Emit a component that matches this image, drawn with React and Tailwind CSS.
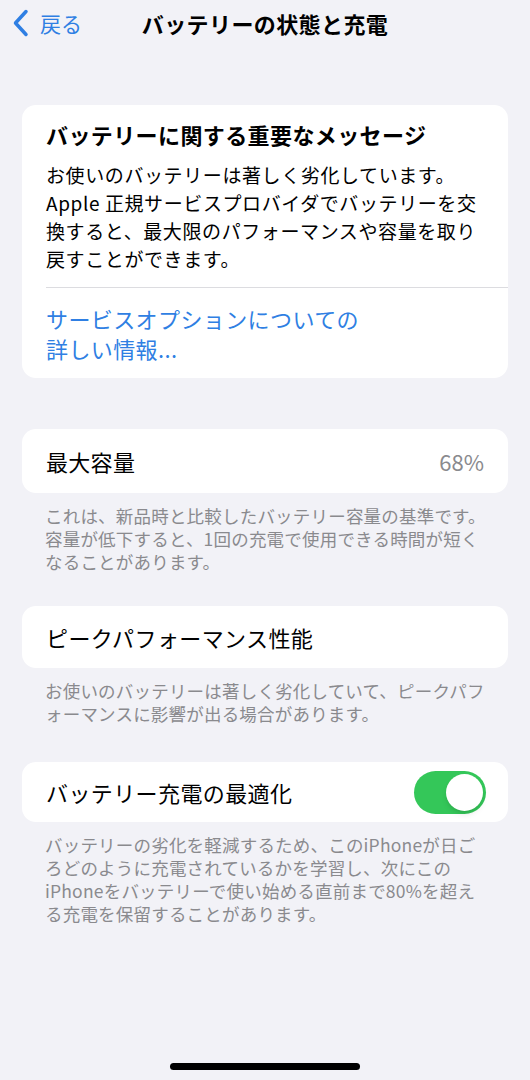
import React, { useState } from 'react';

const font = { fontFamily: '"Noto Sans CJK JP", "Noto Sans", sans-serif' };

const Footer = ({ children }) => (
    <p className="mt-[11px] pl-[45px] whitespace-nowrap text-[17.5px] leading-[23px] tracking-[0.2px] text-[#8a8a8e]">
        {children}
    </p>
);

const Toggle = ({ on, onChange }) => (
    <button
        onClick={() => onChange(!on)}
        className={`w-[72px] h-[43px] rounded-full p-[3px] flex items-center transition-all duration-200 ${on ? 'bg-[#34c759] justify-end' : 'bg-[#e5e5ea] justify-start'}`}
    >
        <span className="w-[37px] h-[37px] rounded-full bg-white shadow-md" />
    </button>
);

export default function App() {
    const [optimized, setOptimized] = useState(true);

    return (
        <div className="w-full min-h-screen bg-[#f2f2f7] text-black flex flex-col" style={font}>
            {/* Header */}
            <div className="relative h-[46px] flex items-center justify-center">
                <div className="absolute left-[12px] top-0 h-[46px] flex items-center gap-[10px] text-[#2f7fe3]">
                    <svg width="18" height="28" viewBox="0 0 18 28" fill="none">
                        <path d="M14 2.5 L3.5 14 L14 25.5" stroke="currentColor" strokeWidth="3.5" strokeLinecap="round" strokeLinejoin="round" />
                    </svg>
                    <span className="text-[21px] leading-none">戻る</span>
                </div>
                <h1 className="text-[22px] font-bold tracking-[0.4px]">バッテリーの状態と充電</h1>
            </div>

            {/* Important message */}
            <div className="mx-[22px] mt-[59px] bg-white rounded-[14px] overflow-hidden">
                <div className="px-6 pt-[14px] pb-[14px]">
                    <h2 className="text-[22px] leading-[30px] font-bold tracking-[0.4px]">バッテリーに関する重要なメッセージ</h2>
                    <p className="mt-[12px] whitespace-nowrap text-[19px] leading-[28px] tracking-[0.6px]">
                        お使いのバッテリーは著しく劣化しています。<br />
                        Apple 正規サービスプロバイダでバッテリーを交<br />
                        換すると、最大限のパフォーマンスや容量を取り<br />
                        戻すことができます。
                    </p>
                </div>
                <div className="ml-6 h-px bg-[#dcdce0]" />
                <div className="px-6 pt-[15px] pb-[15px]">
                    <p className="text-[22px] leading-[30px] tracking-[0.4px] text-[#2f7fe3]">
                        サービスオプションについての<br />
                        詳しい情報...
                    </p>
                </div>
            </div>

            {/* Max capacity */}
            <div className="mx-[22px] mt-[51px] h-[64px] bg-white rounded-[14px] px-6 flex items-center justify-between">
                <span className="text-[22px] tracking-[0.3px]">最大容量</span>
                <span className="text-[22px] text-[#8a8a8e]">68%</span>
            </div>
            <Footer>
                これは、新品時と比較したバッテリー容量の基準です。<br />
                容量が低下すると、1回の充電で使用できる時間が短く<br />
                なることがあります。
            </Footer>

            {/* Peak performance */}
            <div className="mx-[22px] mt-[33px] h-[62px] bg-white rounded-[14px] px-6 flex items-center">
                <span className="text-[22px] tracking-[0.4px]">ピークパフォーマンス性能</span>
            </div>
            <Footer>
                お使いのバッテリーは著しく劣化していて、ピークパフ<br />
                ォーマンスに影響が出る場合があります。
            </Footer>

            {/* Optimized charging */}
            <div className="mx-[22px] mt-[37px] h-[60px] bg-white rounded-[14px] pl-6 pr-[22px] flex items-center justify-between">
                <span className="text-[22px] tracking-[0.4px]">バッテリー充電の最適化</span>
                <Toggle on={optimized} onChange={setOptimized} />
            </div>
            <Footer>
                バッテリーの劣化を軽減するため、このiPhoneが日ご<br />
                ろどのように充電されているかを学習し、次にこの<br />
                iPhoneをバッテリーで使い始める直前まで80%を超え<br />
                る充電を保留することがあります。
            </Footer>

            {/* Home indicator */}
            <div className="mt-auto pb-[10px] flex justify-center">
                <div className="w-[190px] h-[7px] rounded-full bg-black" />
            </div>
        </div>
    );
}
